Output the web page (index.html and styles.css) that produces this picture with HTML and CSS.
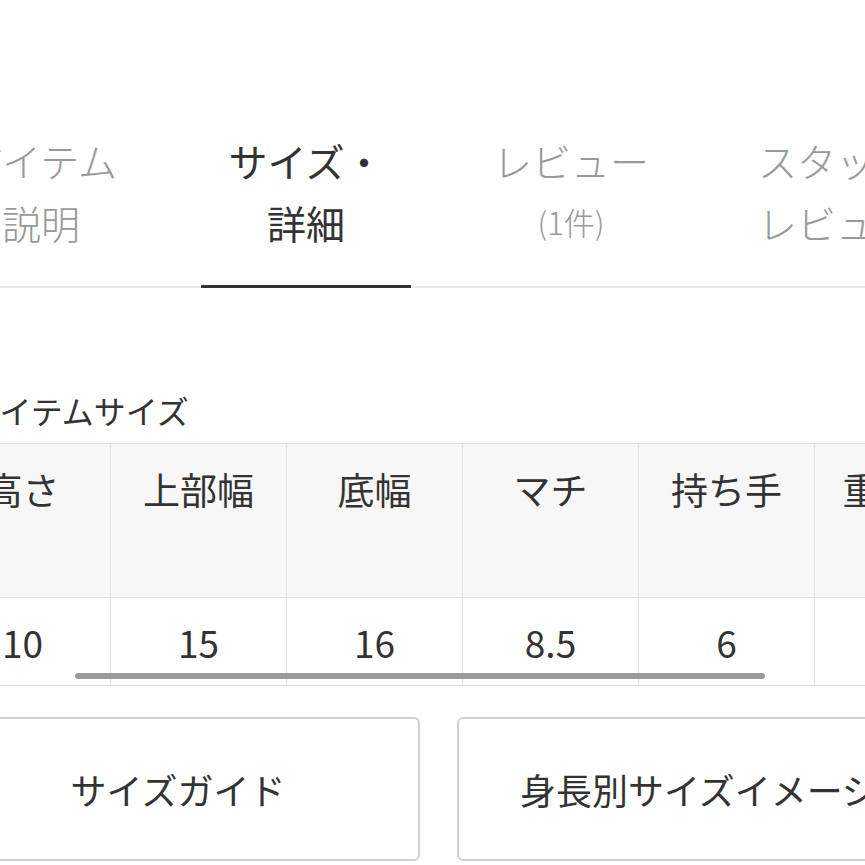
FILE: index.html
```html
<!DOCTYPE html>
<html lang="ja">
<head>
<meta charset="utf-8">
<link rel="stylesheet" href="styles.css">
</head>
<body>
<div class="page">
  <nav class="tabs">
    <div class="tab">アイテム<br>説明</div>
    <div class="tab active">サイズ・<br>詳細</div>
    <div class="tab">レビュー<span class="count">(1件)</span></div>
    <div class="tab">スタッフ<br>レビュー</div>
  </nav>

  <section class="sizes">
    <h2 class="title">アイテムサイズ</h2>
    <div class="table-wrap">
      <table class="size-table">
        <tr class="head">
          <th>高さ</th><th>上部幅</th><th>底幅</th><th>マチ</th><th>持ち手</th><th>重量(g)</th>
        </tr>
        <tr class="data">
          <td>10</td><td>15</td><td>16</td><td>8.5</td><td>6</td><td>300</td>
        </tr>
      </table>
      <div class="scrollbar"></div>
    </div>
  </section>

  <div class="buttons">
    <div class="btn">サイズガイド</div>
    <div class="btn">身長別サイズイメージ</div>
  </div>
</div>
</body>
</html>
```

FILE: styles.css
```css
html, body {
  margin: 0;
  padding: 0;
  background: #ffffff;
}
body {
  width: 865px;
  height: 865px;
  overflow: hidden;
  font-family: "Noto Sans CJK JP", "Noto Sans", sans-serif;
  font-weight: 400;
  color: #333333;
}
.page {
  margin-left: -66px;
  width: 1200px;
}
.tabs {
  display: flex;
  gap: 55px;
  padding-top: 129px;
  padding-left: 2px;
  border-bottom: 2px solid #ebebeb;
}
.tab {
  width: 210px;
  flex: none;
  text-align: center;
  font-size: 39px;
  font-weight: 300;
  line-height: 62px;
  color: #999999;
  padding-bottom: 32px;
  border-bottom: 3px solid transparent;
  margin-bottom: -2px;
  white-space: nowrap;
}
.tab.active {
  color: #333333;
  font-weight: 400;
  border-bottom-color: #333333;
}
.count {
  display: block;
  font-size: 31px;
  line-height: 62px;
}
.sizes {
  padding-left: 35px;
  margin-top: 100px;
}
.title {
  margin: 0 0 11px;
  font-size: 32px;
  font-weight: 400;
  line-height: 44px;
  color: #333333;
}
.table-wrap {
  position: relative;
  margin-left: -35px;
}
.size-table {
  border-collapse: collapse;
  table-layout: fixed;
}
.size-table th,
.size-table td {
  width: 175px;
  border: 1px solid #e3e3e3;
  text-align: center;
  font-size: 37px;
  font-weight: 400;
  color: #333333;
  padding: 0;
}
.size-table tr.head th {
  background: #f7f7f7;
  height: 154px;
  vertical-align: top;
  padding-top: 20px;
  line-height: 50px;
  box-sizing: border-box;
}
.size-table tr.data td {
  background: #ffffff;
  height: 87px;
  vertical-align: middle;
  line-height: 50px;
}
.scrollbar {
  position: absolute;
  left: 141px;
  top: 230px;
  width: 690px;
  height: 6px;
  border-radius: 3px;
  background: #9a9a9a;
}
.buttons {
  display: flex;
  gap: 37px;
  margin-top: 31px;
  padding-left: 2px;
}
.btn {
  flex: none;
  width: 484px;
  height: 144px;
  box-sizing: border-box;
  border: 2px solid #d0d0d0;
  border-radius: 6px;
  display: flex;
  align-items: center;
  justify-content: center;
  font-size: 36px;
  color: #333333;
  white-space: nowrap;
}
```
